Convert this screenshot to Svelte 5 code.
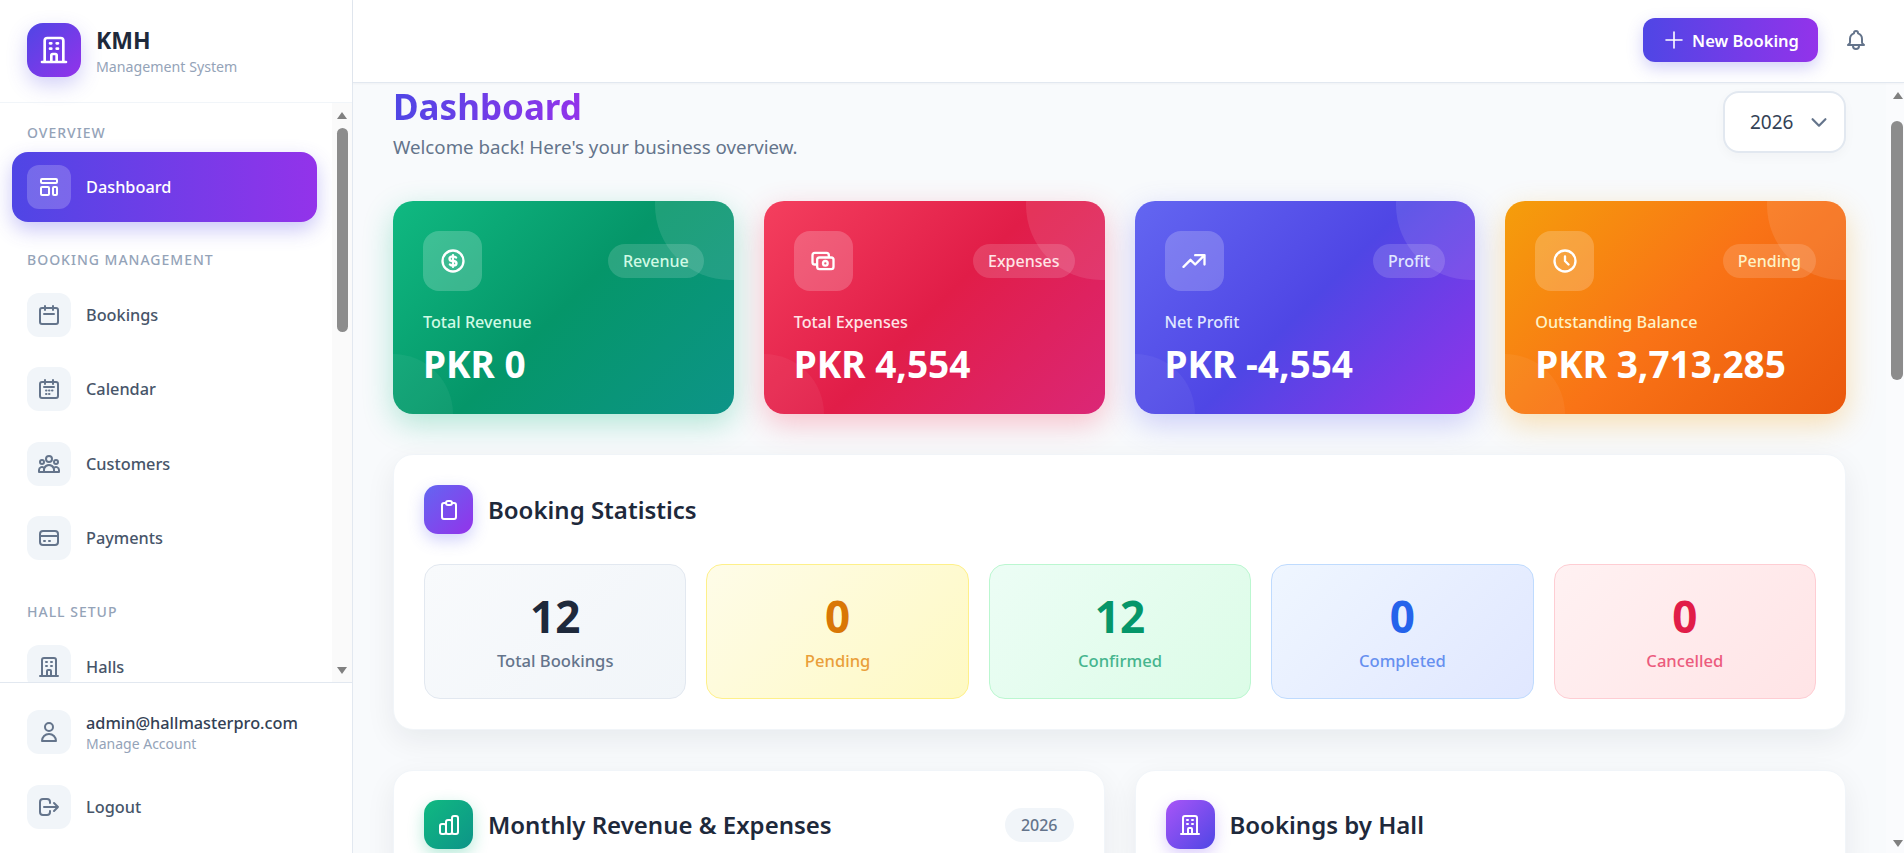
<script>
  const P = {
    building: 'M19 21V5a2 2 0 00-2-2H7a2 2 0 00-2 2v16m14 0h2m-2 0h-5m-9 0H3m2 0h5M9 7h1m-1 4h1m4-4h1m-1 4h1m-5 10v-5a1 1 0 011-1h2a1 1 0 011 1v5m-4 0h4',
    template: 'M4 5a1 1 0 011-1h14a1 1 0 011 1v2a1 1 0 01-1 1H5a1 1 0 01-1-1V5zM4 13a1 1 0 011-1h6a1 1 0 011 1v6a1 1 0 01-1 1H5a1 1 0 01-1-1v-6zM16 13a1 1 0 011-1h2a1 1 0 011 1v6a1 1 0 01-1 1h-2a1 1 0 01-1-1v-6z',
    calendar: 'M8 7V3m8 4V3m-9 8h10M5 21h14a2 2 0 002-2V7a2 2 0 00-2-2H5a2 2 0 00-2 2v12a2 2 0 002 2z',
    users: 'M17 20h5v-2a3 3 0 00-5.356-1.857M17 20H7m10 0v-2c0-.656-.126-1.283-.356-1.857M7 20H2v-2a3 3 0 015.356-1.857M7 20v-2c0-.656.126-1.283.356-1.857m0 0a5.002 5.002 0 019.288 0M15 7a3 3 0 11-6 0 3 3 0 016 0zm6 3a2 2 0 11-4 0 2 2 0 014 0zM7 10a2 2 0 11-4 0 2 2 0 014 0z',
    card: 'M3 10h18M7 15h1m4 0h1m-7 4h12a3 3 0 003-3V8a3 3 0 00-3-3H6a3 3 0 00-3 3v8a3 3 0 003 3z',
    user: 'M16 7a4 4 0 11-8 0 4 4 0 018 0zM12 14a7 7 0 00-7 7h14a7 7 0 00-7-7z',
    logout: 'M17 16l4-4m0 0l-4-4m4 4H7m6 4v1a3 3 0 01-3 3H6a3 3 0 01-3-3V7a3 3 0 013-3h4a3 3 0 013 3v1',
    plus: 'M12 4v16m8-8H4',
    bell: 'M15 17h5l-1.405-1.405A2.032 2.032 0 0118 14.158V11a6.002 6.002 0 00-4-5.659V5a2 2 0 10-4 0v.341C7.67 6.165 6 8.388 6 11v3.159c0 .538-.214 1.055-.595 1.436L4 17h5m6 0v1a3 3 0 11-6 0v-1m6 0H9',
    dollar: 'M12 8c-1.657 0-3 .895-3 2s1.343 2 3 2 3 .895 3 2-1.343 2-3 2m0-8c1.11 0 2.08.402 2.599 1M12 8V7m0 1v8m0 0v1m0-1c-1.11 0-2.08-.402-2.599-1M21 12a9 9 0 11-18 0 9 9 0 0118 0z',
    cash: 'M17 9V7a2 2 0 00-2-2H5a2 2 0 00-2 2v6a2 2 0 002 2h2m2 4h10a2 2 0 002-2v-6a2 2 0 00-2-2H9a2 2 0 00-2 2v6a2 2 0 002 2zm7-5a2 2 0 11-4 0 2 2 0 014 0z',
    trend: 'M13 7h8m0 0v8m0-8l-8 8-4-4-6 6',
    clock: 'M12 8v4l3 3m6-3a9 9 0 11-18 0 9 9 0 0118 0z',
    clipboard: 'M9 5H7a2 2 0 00-2 2v12a2 2 0 002 2h10a2 2 0 002-2V7a2 2 0 00-2-2h-2M9 5a2 2 0 002 2h2a2 2 0 002-2M9 5a2 2 0 012-2h2a2 2 0 012 2',
    chart: 'M9 19v-6a2 2 0 00-2-2H5a2 2 0 00-2 2v6a2 2 0 002 2h2a2 2 0 002-2zm0 0V9a2 2 0 012-2h2a2 2 0 012 2v10m-6 0a2 2 0 002 2h2a2 2 0 002-2m0 0V5a2 2 0 012-2h2a2 2 0 012 2v14a2 2 0 01-2 2h-2a2 2 0 01-2-2z',
    chevron: 'M19 9l-7 7-7-7',
    calgrid: 'M8 7V3m8 4V3M7 10h10M5 21h14a2 2 0 002-2V7a2 2 0 00-2-2H5a2 2 0 00-2 2v12a2 2 0 002 2zM9 13.5h.5M12 13.5h.5M15 13.5h.5M9 17h.5M12 17h.5'
  };

  const groups = [
    { title: 'Overview', items: [{ label: 'Dashboard', icon: 'template', active: true }] },
    { title: 'Booking Management', items: [
      { label: 'Bookings', icon: 'calendar' },
      { label: 'Calendar', icon: 'calgrid' },
      { label: 'Customers', icon: 'users' },
      { label: 'Payments', icon: 'card' }
    ] },
    { title: 'Hall Setup', items: [{ label: 'Halls', icon: 'building' }] }
  ];

  const cards = [
    { cls: 'green', icon: 'dollar', badge: 'Revenue', label: 'Total Revenue', value: 'PKR 0' },
    { cls: 'red', icon: 'cash', badge: 'Expenses', label: 'Total Expenses', value: 'PKR 4,554' },
    { cls: 'indigo', icon: 'trend', badge: 'Profit', label: 'Net Profit', value: 'PKR -4,554' },
    { cls: 'orange', icon: 'clock', badge: 'Pending', label: 'Outstanding Balance', value: 'PKR 3,713,285' }
  ];

  const tiles = [
    { cls: 'slate', value: '12', label: 'Total Bookings' },
    { cls: 'amber', value: '0', label: 'Pending' },
    { cls: 'mint', value: '12', label: 'Confirmed' },
    { cls: 'blue', value: '0', label: 'Completed' },
    { cls: 'rose', value: '0', label: 'Cancelled' }
  ];
</script>

{#snippet icon(name, size = 24, sw = 2)}
  <svg width={size} height={size} viewBox="0 0 24 24" fill="none" stroke="currentColor" stroke-width={sw} stroke-linecap="round" stroke-linejoin="round" aria-hidden="true"><path d={P[name]} /></svg>
{/snippet}

{#snippet scrollbar(cls)}
  <div class="sbar {cls}">
    <span class="arrow up"></span>
    <span class="thumb"></span>
    <span class="arrow down"></span>
  </div>
{/snippet}

<div class="app">
  <aside class="sidebar">
    <div class="brand">
      <div class="logo">{@render icon('building', 32, 2)}</div>
      <div class="brand-text">
        <div class="brand-name">KMH</div>
        <div class="brand-sub">Management System</div>
      </div>
    </div>

    <div class="nav-wrap">
      <nav class="nav">
        {#each groups as g}
          <div class="group-title">{g.title}</div>
          {#each g.items as it}
            <div class="item" class:active={it.active}>
              <span class="item-icon">{@render icon(it.icon)}</span>
              <span class="item-label">{it.label}</span>
            </div>
          {/each}
        {/each}
      </nav>
      {@render scrollbar('side')}
    </div>

    <div class="foot">
      <div class="item">
        <span class="item-icon">{@render icon('user')}</span>
        <span class="acct">
          <span class="acct-mail">admin@hallmasterpro.com</span>
          <span class="acct-sub">Manage Account</span>
        </span>
      </div>
      <div class="item">
        <span class="item-icon">{@render icon('logout')}</span>
        <span class="item-label">Logout</span>
      </div>
    </div>
  </aside>

  <div class="right">
    <header class="topbar">
      <button class="new">{@render icon('plus', 24, 1.6)}<span>New Booking</span></button>
      <span class="bell">{@render icon('bell', 24, 2)}</span>
    </header>

    <div class="main-wrap">
      <main class="main">
        <div class="page-head">
          <div>
            <h1>Dashboard</h1>
            <p>Welcome back! Here's your business overview.</p>
          </div>
          <div class="year"><span>2026</span><span class="chev">{@render icon('chevron', 22, 2.4)}</span></div>
        </div>

        <section class="cards">
          {#each cards as c}
            <article class="card {c.cls}">
              <span class="blob tr"></span>
              <span class="blob bl"></span>
              <div class="card-top">
                <span class="card-icon">{@render icon(c.icon, 28)}</span>
                <span class="badge">{c.badge}</span>
              </div>
              <div class="card-label">{c.label}</div>
              <div class="card-value">{c.value}</div>
            </article>
          {/each}
        </section>

        <section class="panel">
          <div class="panel-head">
            <span class="p-icon violet">{@render icon('clipboard')}</span>
            <h2>Booking Statistics</h2>
          </div>
          <div class="tiles">
            {#each tiles as t}
              <div class="tile {t.cls}">
                <div class="tile-value">{t.value}</div>
                <div class="tile-label">{t.label}</div>
              </div>
            {/each}
          </div>
        </section>

        <div class="two">
          <section class="panel">
            <div class="panel-head">
              <span class="p-icon teal">{@render icon('chart')}</span>
              <h2>Monthly Revenue &amp; Expenses</h2>
              <span class="chip">2026</span>
            </div>
          </section>
          <section class="panel">
            <div class="panel-head">
              <span class="p-icon purple">{@render icon('building')}</span>
              <h2>Bookings by Hall</h2>
            </div>
          </section>
        </div>
      </main>
      {@render scrollbar('page')}
    </div>
  </div>
</div>

<style>
  :global(body) { margin: 0; background: #f8fafc; }
  .app {
    display: flex;
    height: 853px;
    overflow: hidden;
    font-family: "Noto Sans", "Open Sans", sans-serif;
    color: #1e293b;
    background: #f8fafc;
  }

  /* Sidebar */
  .sidebar {
    width: 353px;
    flex: none;
    box-sizing: border-box;
    display: flex;
    flex-direction: column;
    background: #fff;
    border-right: 1px solid #e2e8f0;
    height: 853px;
  }
  .brand {
    height: 103px;
    flex: none;
    box-sizing: border-box;
    display: flex;
    align-items: center;
    gap: 15px;
    padding: 0 27px 3px;
    border-bottom: 1px solid #f1f5f9;
  }
  .logo {
    width: 54px;
    height: 54px;
    border-radius: 16px;
    background: linear-gradient(135deg, #4f46e5, #9333ea);
    color: #fff;
    display: flex;
    align-items: center;
    justify-content: center;
    box-shadow: 0 8px 20px rgba(79, 70, 229, .25);
  }
  .brand-text { padding-top: 4px; }
  .brand-name { font-size: 23px; font-weight: 700; line-height: 28px; color: #1e293b; }
  .brand-sub { margin-top: 3px; font-size: 14.2px; line-height: 20px; color: #94a3b8; }

  .nav-wrap { flex: 1; min-height: 0; display: flex; }
  .nav { flex: 1; min-width: 0; overflow: hidden; padding: 19.6px 15px 0 12px; }
  .group-title {
    margin: 0 0 10.4px 15px;
    font-size: 14px;
    line-height: 19px;
    font-weight: 500;
    letter-spacing: 1px;
    text-transform: uppercase;
    color: #94a3b8;
  }
  .item {
    height: 70.4px;
    box-sizing: border-box;
    display: flex;
    align-items: center;
    gap: 15px;
    padding: 0 15px;
    margin-bottom: 4px;
    border-radius: 16px;
    font-size: 16.3px;
    font-weight: 500;
    color: #475569;
  }
  .item + .group-title { margin-top: 28.6px; }
  .item.active + .group-title { margin-top: 28px; }
  .item.active {
    color: #fff;
    background: linear-gradient(90deg, #4f46e5, #9333ea);
    box-shadow: 0 8px 20px rgba(79, 70, 229, .3);
  }
  .item-icon {
    width: 44px;
    height: 44px;
    flex: none;
    border-radius: 12px;
    background: #f1f5f9;
    color: #64748b;
    display: flex;
    align-items: center;
    justify-content: center;
  }
  .active .item-icon { background: rgba(255, 255, 255, .2); color: #fff; }

  .foot {
    flex: none;
    height: 171px;
    box-sizing: border-box;
    border-top: 1px solid #e2e8f0;
    padding: 14px 12px 0;
  }
  .acct { display: flex; flex-direction: column; }
  .acct-mail { line-height: 22px; color: #334155; }
  .acct-sub { font-size: 14px; line-height: 19px; font-weight: 400; color: #94a3b8; }

  /* Scrollbars */
  .sbar { flex: none; display: flex; flex-direction: column; align-items: center; }
  .sbar.side { width: 20px; background: #fafafa; padding-top: 9px; padding-bottom: 8px; box-sizing: border-box; }
  .sbar.page { width: 18px; background: #fafbfd; padding: 9px 0 6px; box-sizing: border-box; align-items: flex-end; }
  .thumb { display: block; background: #8c8c8c; border-radius: 6px; }
  .side .thumb { width: 11px; height: 204px; margin-top: 9px; }
  .page .thumb { width: 12px; height: 259px; margin: 22px 1px 0 0; }
  .arrow { display: block; width: 0; height: 0; border-left: 5.5px solid transparent; border-right: 5.5px solid transparent; }
  .arrow.up { border-bottom: 7px solid #808080; }
  .arrow.down { border-top: 7px solid #808080; margin-top: auto; }
  .page .arrow { margin-right: 1px; }
  .page .arrow.down { margin-top: auto; }

  /* Right column */
  .right { flex: 1; min-width: 0; display: flex; flex-direction: column; }
  .topbar {
    height: 83px;
    flex: none;
    box-sizing: border-box;
    display: flex;
    align-items: center;
    justify-content: flex-end;
    gap: 26px;
    padding: 0 36px 2px 0;
    background: #fff;
    border-bottom: 1px solid #e2e8f0;
    box-shadow: 0 1px 2px rgba(15, 23, 42, .04);
    position: relative;
    z-index: 2;
  }
  .new {
    width: 175px;
    height: 44px;
    border: 0;
    border-radius: 12px;
    padding: 0;
    display: flex;
    align-items: center;
    justify-content: center;
    gap: 6px;
    color: #fff;
    font: 600 16.5px "Noto Sans", "Open Sans", sans-serif;
    background: linear-gradient(90deg, #4f46e5, #9333ea);
    box-shadow: 0 6px 16px rgba(79, 70, 229, .25);
  }
  .bell { color: #64748b; display: flex; }

  .main-wrap { flex: 1; min-height: 0; display: flex; }
  .main { flex: 1; min-width: 0; overflow: hidden; padding: 0 40px; box-sizing: border-box; }
  .page-head { display: flex; justify-content: space-between; height: 118px; }
  h1 {
    margin: 0;
    font-size: 35px;
    line-height: 48px;
    font-weight: 700;
    background: linear-gradient(90deg, #4f46e5, #9333ea);
    -webkit-background-clip: text;
    background-clip: text;
    color: transparent;
    width: max-content;
  }
  .page-head p { margin: 2px 0 0; font-size: 18.7px; line-height: 28px; color: #64748b; }
  .year {
    width: 123px;
    height: 62px;
    margin-top: 8px;
    box-sizing: border-box;
    display: flex;
    align-items: center;
    gap: 15px;
    padding-left: 25px;
    background: #fff;
    border: 2px solid #e2e8f0;
    border-radius: 16px;
    font-size: 19px;
    color: #334155;
    box-shadow: 0 4px 12px rgba(15, 23, 42, .03);
  }
  .chev { display: flex; color: #64748b; }

  .cards { display: grid; grid-template-columns: repeat(4, 1fr); gap: 30px; }
  .card {
    height: 213px;
    box-sizing: border-box;
    position: relative;
    overflow: hidden;
    padding: 30px;
    border-radius: 20px;
    color: #fff;
  }
  .green { background: linear-gradient(135deg, #10b981, #059669 50%, #0d9488); box-shadow: 0 10px 30px rgba(16, 185, 129, .3); --tint: #d1fae5; }
  .red { background: linear-gradient(135deg, #f43f5e, #e11d48 50%, #db2777); box-shadow: 0 10px 30px rgba(244, 63, 94, .3); --tint: #ffe4e6; }
  .indigo { background: linear-gradient(135deg, #6366f1, #4f46e5 50%, #9333ea); box-shadow: 0 10px 30px rgba(99, 102, 241, .3); --tint: #e0e7ff; }
  .orange { background: linear-gradient(135deg, #f59e0b, #f97316 50%, #ea580c); box-shadow: 0 10px 30px rgba(245, 158, 11, .3); --tint: #fef3c7; }
  .blob { position: absolute; border-radius: 50%; background: rgba(255, 255, 255, .1); }
  .blob.tr { width: 150px; height: 150px; top: -71px; right: -71px; }
  .blob.bl { width: 120px; height: 120px; bottom: -60px; left: -60px; background: rgba(255, 255, 255, .05); }
  .card-top { display: flex; justify-content: space-between; align-items: center; position: relative; }
  .card-icon {
    width: 59px;
    height: 60px;
    border-radius: 16px;
    background: rgba(255, 255, 255, .2);
    display: flex;
    align-items: center;
    justify-content: center;
  }
  .badge {
    height: 34px;
    display: flex;
    align-items: center;
    padding: 0 15px;
    border-radius: 17px;
    font-size: 16px;
    font-weight: 500;
    background: rgba(255, 255, 255, .15);
    color: var(--tint);
  }
  .card-label {
    position: relative;
    margin-top: 19px;
    font-size: 16.2px;
    line-height: 24px;
    font-weight: 500;
    color: var(--tint);
  }
  .card-value { position: relative; margin-top: 6px; font-size: 37px; line-height: 48px; font-weight: 700; }

  .panel {
    background: #fff;
    border: 1px solid #f1f5f9;
    border-radius: 20px;
    padding: 30px;
    box-shadow: 0 10px 30px rgba(15, 23, 42, .07);
  }
  .cards + .panel { margin-top: 40px; }
  .panel-head { display: flex; align-items: center; gap: 15px; }
  .p-icon {
    width: 49px;
    height: 49px;
    flex: none;
    border-radius: 14px;
    color: #fff;
    display: flex;
    align-items: center;
    justify-content: center;
  }
  .violet { background: linear-gradient(135deg, #6366f1, #9333ea); box-shadow: 0 6px 16px rgba(99, 102, 241, .3); }
  .teal { background: linear-gradient(135deg, #10b981, #0d9488); box-shadow: 0 6px 16px rgba(16, 185, 129, .3); }
  .purple { background: linear-gradient(135deg, #a855f7, #4f46e5); box-shadow: 0 6px 16px rgba(139, 92, 246, .3); }
  h2 { margin: 0; font-size: 24px; line-height: 32px; font-weight: 600; color: #1e293b; }
  .chip {
    margin-left: auto;
    height: 34px;
    display: flex;
    align-items: center;
    padding: 0 16px;
    border-radius: 17px;
    background: #f1f5f9;
    font-size: 16px;
    font-weight: 500;
    color: #64748b;
  }

  .tiles { margin: 30px -1px 0 0; display: grid; grid-template-columns: repeat(5, 1fr); gap: 20px; }
  .tile {
    height: 135px;
    box-sizing: border-box;
    border: 1px solid;
    border-radius: 16px;
    text-align: center;
    padding-top: 21px;
  }
  .tile-value { font-size: 44px; line-height: 60px; font-weight: 700; }
  .tile-label { margin-top: 3px; font-size: 16.6px; line-height: 24px; font-weight: 500; }
  .slate { background: linear-gradient(135deg, #f8fafc, #f1f5f9); border-color: #e2e8f0; }
  .slate .tile-value { color: #1e293b; }
  .slate .tile-label { color: #64748b; }
  .amber { background: linear-gradient(135deg, #fefce8, #fef9c3); border-color: #fef08a; }
  .amber .tile-value { color: #d97706; }
  .amber .tile-label { color: #ea9f3a; }
  .mint { background: linear-gradient(135deg, #ecfdf5, #dcfce7); border-color: #bbf7d0; }
  .mint .tile-value { color: #059669; }
  .mint .tile-label { color: #46b58e; }
  .blue { background: linear-gradient(135deg, #eff6ff, #e0e7ff); border-color: #bfdbfe; }
  .blue .tile-value { color: #2563eb; }
  .blue .tile-label { color: #6690f0; }
  .rose { background: linear-gradient(135deg, #fff1f2, #ffe4e6); border-color: #fecdd3; }
  .rose .tile-value { color: #e11d48; }
  .rose .tile-label { color: #ec5b7d; }

  .two { margin-top: 40px; display: grid; grid-template-columns: 1fr 1fr; gap: 30px; }
  .two .panel { padding-top: 29px; }
</style>
